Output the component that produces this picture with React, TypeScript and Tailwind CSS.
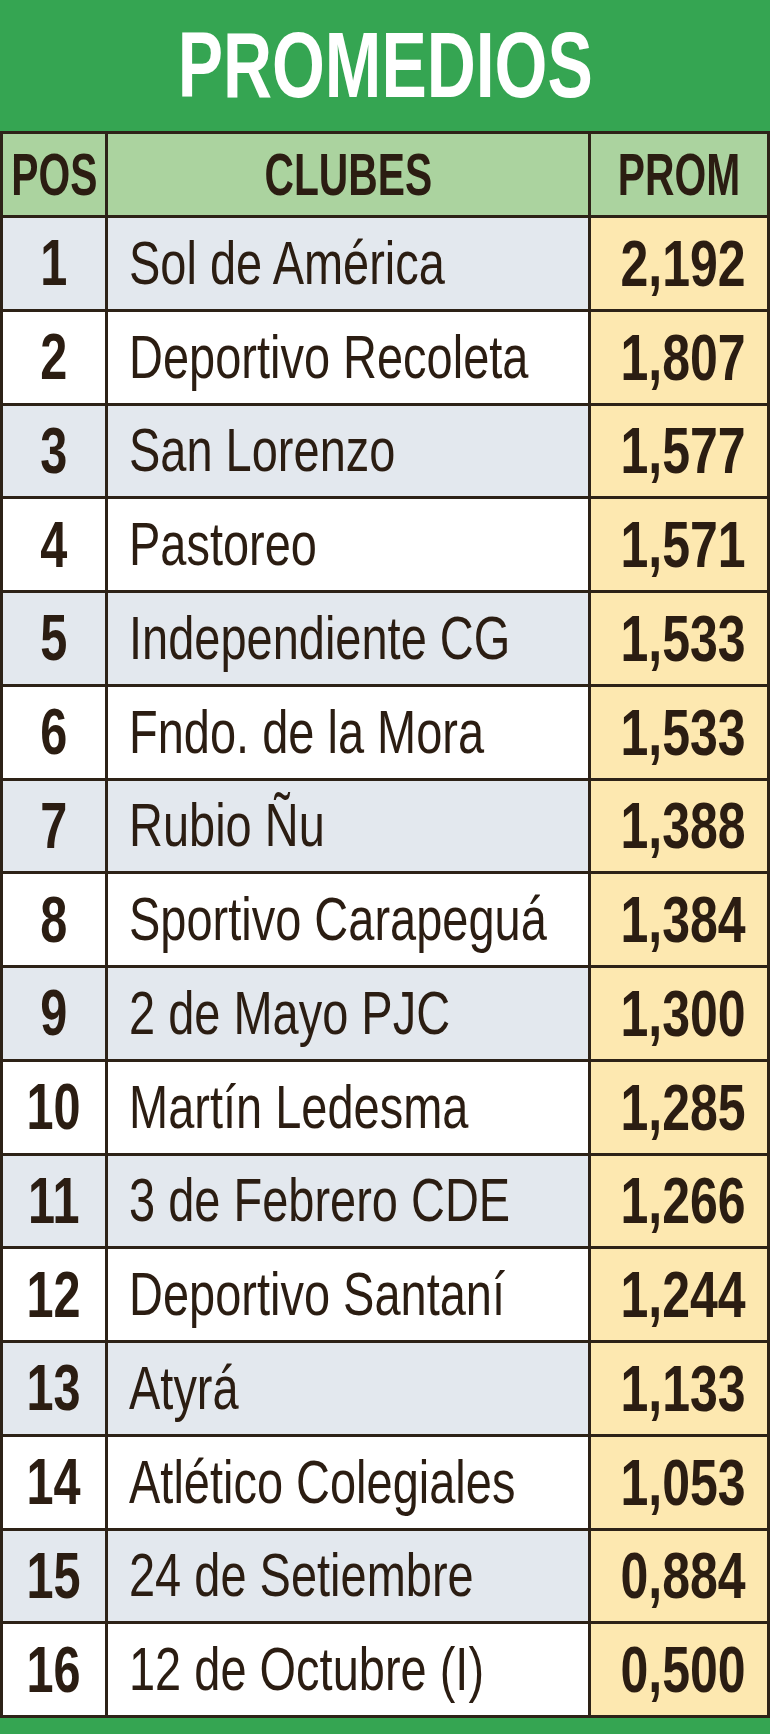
import React from "react";

const clubs: [string, string][] = [
    ["Sol de América", "2,192"],
    ["Deportivo Recoleta", "1,807"],
    ["San Lorenzo", "1,577"],
    ["Pastoreo", "1,571"],
    ["Independiente CG", "1,533"],
    ["Fndo. de la Mora", "1,533"],
    ["Rubio Ñu", "1,388"],
    ["Sportivo Carapeguá", "1,384"],
    ["2 de Mayo PJC", "1,300"],
    ["Martín Ledesma", "1,285"],
    ["3 de Febrero CDE", "1,266"],
    ["Deportivo Santaní", "1,244"],
    ["Atyrá", "1,133"],
    ["Atlético Colegiales", "1,053"],
    ["24 de Setiembre", "0,884"],
    ["12 de Octubre (I)", "0,500"],
];

// condensed look: Liberation Sans squeezed horizontally
const head = "inline-block font-bold text-[60px] leading-none scale-x-[0.68] origin-center whitespace-nowrap";

export default function App() {
    return (
        <div className="w-[770px] h-[1734px] bg-[#35a552] flex flex-col font-['Liberation_Sans',Arial,sans-serif]">
            <div className="h-[131px] flex items-center justify-center">
                <span className="inline-block text-white font-bold text-[93px] leading-none scale-x-[0.73] origin-center whitespace-nowrap">
                    PROMEDIOS
                </span>
            </div>
            <div className="h-[1587px] bg-[#2d2217] p-[3px] grid grid-cols-[102px_480px_176px] grid-rows-[81px_repeat(16,1fr)] gap-[3px] text-[#2b1d12]">
                <div className="bg-[#abd39f] flex items-center justify-center overflow-hidden"><span className={head}>POS</span></div>
                <div className="bg-[#abd39f] flex items-center justify-center overflow-hidden"><span className={head}>CLUBES</span></div>
                <div className="bg-[#abd39f] flex items-center justify-center overflow-hidden"><span className={head}>PROM</span></div>
                {clubs.map(([name, prom], i) => {
                    const bg = i % 2 === 0 ? "bg-[#e3e8ee]" : "bg-white";
                    return (
                        <React.Fragment key={i}>
                            <div className={`${bg} flex items-center justify-center`}>
                                <span className="inline-block font-bold text-[64px] leading-none scale-x-[0.76] origin-center">{i + 1}</span>
                            </div>
                            <div className={`${bg} flex items-center pl-[21px]`}>
                                <span className="inline-block text-[61px] leading-none scale-x-[0.77] origin-left whitespace-nowrap">{name}</span>
                            </div>
                            <div className="bg-[#fde8b0] flex items-center justify-end pr-[21px]">
                                <span className="inline-block font-bold text-[65px] leading-none scale-x-[0.77] origin-right">{prom}</span>
                            </div>
                        </React.Fragment>
                    );
                })}
            </div>
        </div>
    );
}
